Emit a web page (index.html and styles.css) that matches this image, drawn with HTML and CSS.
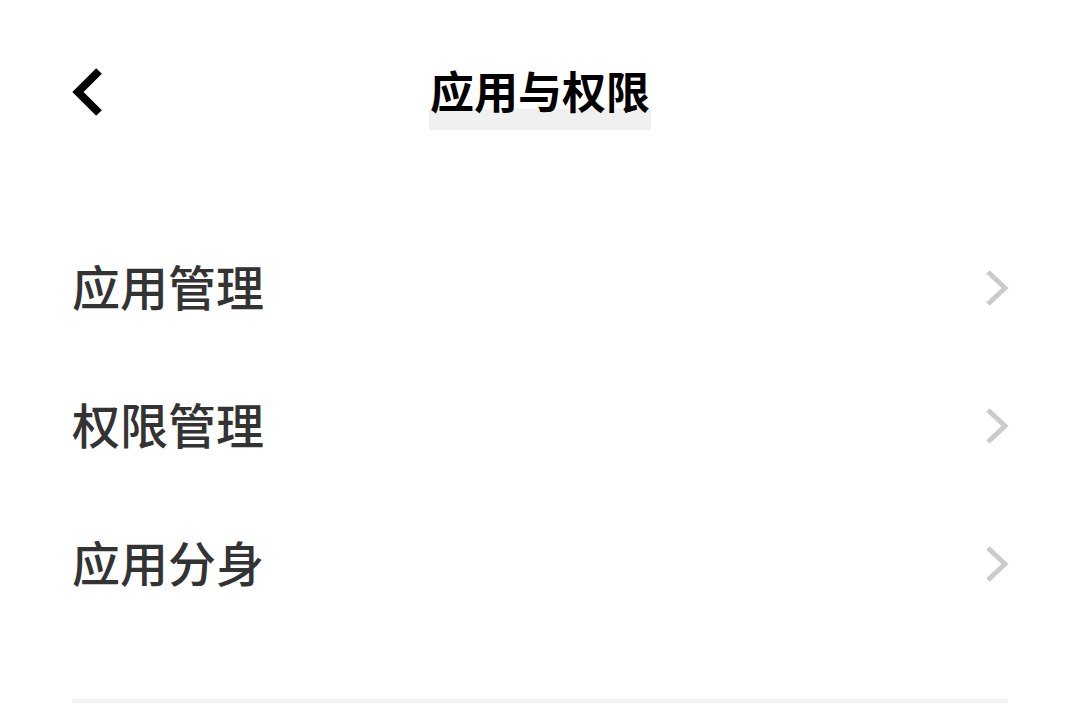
FILE: index.html
```html
<!DOCTYPE html>
<html lang="zh">
<head>
<meta charset="utf-8">
<link rel="stylesheet" href="styles.css">
</head>
<body>
<div class="page">
  <header class="header">
    <svg class="back" width="30" height="48" viewBox="0 0 30 48"><polyline points="27,3 6,24 27,45" fill="none" stroke="#000" stroke-width="8"/></svg>
    <div class="title">应用与权限</div>
  </header>
  <ul class="list">
    <li class="row"><span class="label">应用管理</span><svg class="chev" width="26" height="40" viewBox="0 0 26 40"><polyline points="4,4 21,20 4,36" fill="none" stroke="#cbcbcb" stroke-width="5"/></svg></li>
    <li class="row"><span class="label">权限管理</span><svg class="chev" width="26" height="40" viewBox="0 0 26 40"><polyline points="4,4 21,20 4,36" fill="none" stroke="#cbcbcb" stroke-width="5"/></svg></li>
    <li class="row"><span class="label">应用分身</span><svg class="chev" width="26" height="40" viewBox="0 0 26 40"><polyline points="4,4 21,20 4,36" fill="none" stroke="#cbcbcb" stroke-width="5"/></svg></li>
  </ul>
  <div class="divider"></div>
</div>
</body>
</html>
```
FILE: styles.css
```css
* { box-sizing: border-box; }
html, body { margin: 0; padding: 0; background: #fff; }
body { font-family: "Noto Sans CJK SC", "Noto Sans", sans-serif; }
.page { padding: 0 72px 0 72px; width: 1080px; }
.header { position: relative; height: 188px; display: flex; align-items: flex-start; justify-content: center; }
.back { position: absolute; left: 0; top: 68px; }
.title {
  margin-top: 62px;
  font-size: 44px; font-weight: 700; color: #000; line-height: 44px;
  height: 68px; padding: 6px 1px 0;
  background: linear-gradient(to bottom, #fff 0, #fff 47px, #f0f0f0 47px, #f0f0f0 100%);
}
.list { list-style: none; margin: 28px 0 0; padding: 0; }
.row { height: 138px; display: flex; align-items: center; justify-content: space-between; }
.label { font-size: 48px; font-weight: 500; color: #333; line-height: 1; }
.chev { margin-right: -2px; margin-top: 6px; }
.divider { margin-top: 69px; height: 4px; background: #f2f2f2; }
```
